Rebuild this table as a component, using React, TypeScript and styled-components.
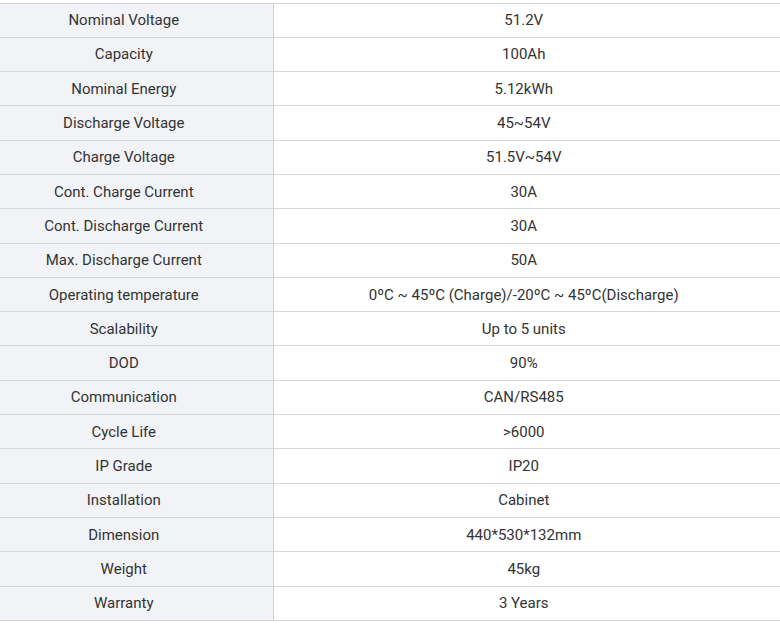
import React from "react";
import styled, { createGlobalStyle } from "styled-components";

const Global = createGlobalStyle`
  html, body { margin: 0; padding: 0; background: #ffffff; overflow: hidden; }
  body { font-family: Roboto, "Liberation Sans", Arial, sans-serif; }
`;

const Wrap = styled.div`
  padding-top: 2.5px;
  width: 780px;
`;

const Table = styled.table`
  width: 100%;
  border-collapse: collapse;
  table-layout: fixed;
  font-size: 15px;
  color: #333333;
`;

const Row = styled.tr`
  height: 34.3px;
  border-top: 1px solid #d6d6d6;
  border-bottom: 1px solid #d6d6d6;
`;

const Label = styled.td`
  width: 273px;
  box-sizing: border-box;
  background: #f2f3f7;
  border-right: 1px solid #d0d0d0;
  text-align: center;
  padding: 0 25px 0 0;
  vertical-align: middle;
  white-space: nowrap;
`;

const Value = styled.td`
  background: #ffffff;
  text-align: center;
  padding: 0 6px 0 0;
  vertical-align: middle;
  white-space: nowrap;
`;

const specs: [string, string][] = [
  ["Nominal Voltage", "51.2V"],
  ["Capacity", "100Ah"],
  ["Nominal Energy", "5.12kWh"],
  ["Discharge Voltage", "45~54V"],
  ["Charge Voltage", "51.5V~54V"],
  ["Cont. Charge Current", "30A"],
  ["Cont. Discharge Current", "30A"],
  ["Max. Discharge Current", "50A"],
  ["Operating temperature", "0ºC ~ 45ºC (Charge)/-20ºC ~ 45ºC(Discharge)"],
  ["Scalability", "Up to 5 units"],
  ["DOD", "90%"],
  ["Communication", "CAN/RS485"],
  ["Cycle Life", ">6000"],
  ["IP Grade", "IP20"],
  ["Installation", "Cabinet"],
  ["Dimension", "440*530*132mm"],
  ["Weight", "45kg"],
  ["Warranty", "3 Years"],
];

export default function App() {
  return (
    <>
      <Global />
      <Wrap>
        <Table>
          <tbody>
            {specs.map(([k, v]) => (
              <Row key={k}>
                <Label>{k}</Label>
                <Value>{v}</Value>
              </Row>
            ))}
          </tbody>
        </Table>
      </Wrap>
    </>
  );
}
